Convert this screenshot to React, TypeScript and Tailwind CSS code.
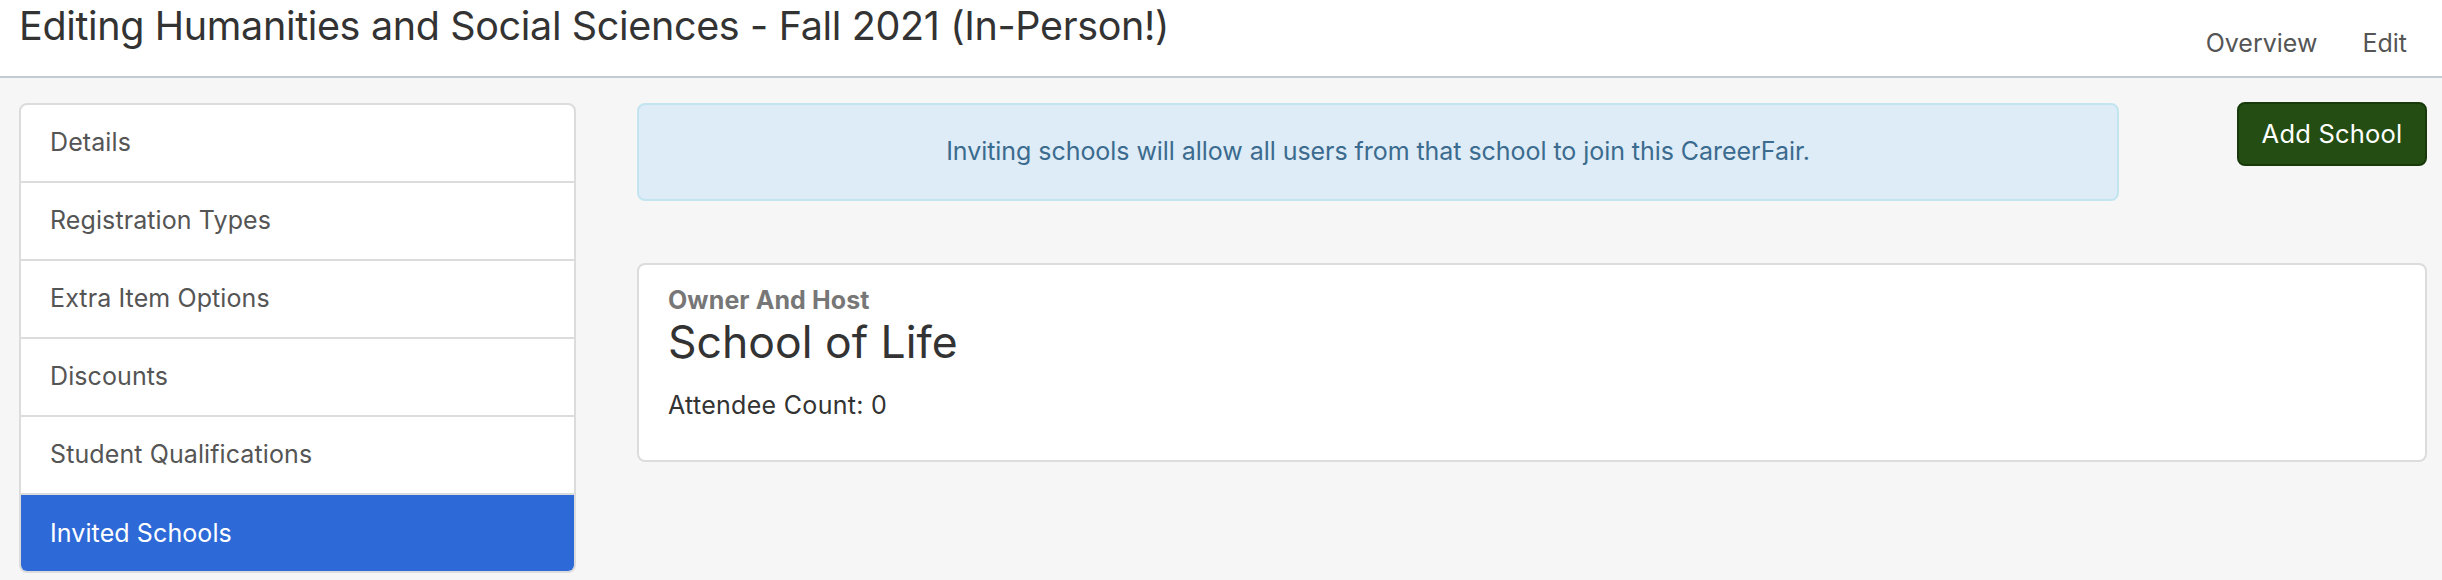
import React from "react";

const items = [
  "Details",
  "Registration Types",
  "Extra Item Options",
  "Discounts",
  "Student Qualifications",
  "Invited Schools",
];

export default function App() {
  return (
    <div
      className="min-h-[580px] bg-[#f6f6f6] text-[#333]"
      style={{ fontFamily: "Inter, 'Noto Sans', sans-serif" }}
    >
      <header className="h-[78px] bg-white border-b-2 border-[#c3cad2] flex items-start justify-between pl-[19px] pr-[35px]">
        <h1 className="text-[39.5px] leading-[48px] pt-[2px] text-[#333] font-normal tracking-[-0.35px]">
          Editing Humanities and Social Sciences - Fall 2021 (In-Person!)
        </h1>
        <nav className="flex gap-[45px] pt-[28px] text-[25px] leading-[30px] text-[#555]">
          <span>Overview</span>
          <span>Edit</span>
        </nav>
      </header>

      <main className="flex pl-[19px] pr-[15px] pt-[25px] gap-[61px]">
        <div className="w-[557px] shrink-0 rounded-[8px] border-2 border-[#dcdcdc] bg-white overflow-hidden">
          {items.map((label, i) => {
            const active = i === items.length - 1;
            return (
              <div
                key={label}
                className={
                  active
                    ? "h-[78px] flex items-center text-[25px] tracking-[0.1px] bg-[#2d6ad8] text-white -mx-[2px] -mb-[2px] px-[31px]"
                    : "h-[78px] flex items-center pl-[29px] text-[25px] tracking-[0.1px] text-[#555] border-b-2 border-[#dcdcdc]"
                }
              >
                {label}
              </div>
            );
          })}
        </div>

        <div className="flex-1 flex flex-col">
          <div className="flex justify-between items-start">
            <div className="w-[1482px] h-[98px] rounded-[8px] border-2 border-[#c2e5ef] bg-[#deecf7] flex items-center justify-center text-[25px] tracking-[-0.05px] text-[#3b6b8e]">
              Inviting schools will allow all users from that school to join this CareerFair.
            </div>
            <button className="mt-[-1px] w-[190px] h-[64px] rounded-[8px] border-2 border-[#183a0b] bg-[#234d12] text-white text-[25.5px] tracking-[0.2px]">
              Add School
            </button>
          </div>

          <div className="mt-[62px] h-[199px] rounded-[8px] border-2 border-[#dcdcdc] bg-white px-[29px] pt-[21px]">
            <div className="text-[25px] font-bold text-[#777] leading-[29px] tracking-[0.1px]">
              Owner And Host
            </div>
            <div className="text-[44.5px] leading-[55px] text-[#333]">School of Life</div>
            <div className="mt-[21px] text-[25px] leading-[29px] tracking-[0.3px] text-[#333]">Attendee Count: 0</div>
          </div>
        </div>
      </main>
    </div>
  );
}
